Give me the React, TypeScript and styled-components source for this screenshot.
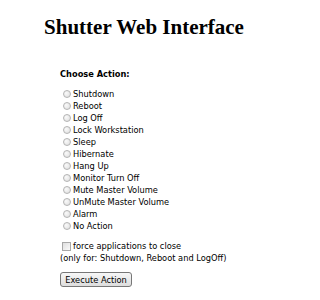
import styled, { createGlobalStyle } from 'styled-components';

const GlobalStyle = createGlobalStyle`
  body {
    margin: 0;
    background: #fff;
  }
`;

const Page = styled.div`
  width: 288px;
  height: 300px;
  background: #fff;
`;

const Title = styled.h1`
  margin: 15px 0 0 0;
  text-align: center;
  font-family: 'Liberation Serif', 'Times New Roman', serif;
  font-weight: 700;
  font-size: 21px;
  line-height: 24px;
  color: #000;
`;

const Form = styled.form`
  display: flex;
  flex-direction: column;
  padding-left: 60px;
  margin-top: 29px;
  font-family: 'DejaVu Sans Condensed', 'DejaVu Sans', Tahoma, sans-serif;
  font-stretch: condensed;
  font-size: 9.2px;
  color: #000;
`;

const Heading = styled.div`
  font-weight: 700;
  line-height: 12px;
`;

const Options = styled.div`
  display: flex;
  flex-direction: column;
  margin-top: 8px;
`;

const Row = styled.label`
  display: flex;
  align-items: center;
  height: 12px;
  line-height: 12px;
`;

const Radio = styled.input.attrs({ type: 'radio' })`
  appearance: none;
  box-sizing: border-box;
  width: 8px;
  height: 8px;
  margin: 0 2.5px 0 2.5px;
  border: 1px solid #b4b4b4;
  border-radius: 50%;
  background: radial-gradient(circle at 35% 35%, #fafafa, #dcdcdc);
`;

const CheckRow = styled.label`
  display: flex;
  align-items: center;
  height: 12px;
  line-height: 12px;
  margin-top: 8px;
`;

const Check = styled.input.attrs({ type: 'checkbox' })`
  appearance: none;
  box-sizing: border-box;
  width: 9px;
  height: 9px;
  margin: 0 2px 0 2px;
  border: 1px solid #a8a8a8;
  background: linear-gradient(135deg, #dedede, #fafafa);
`;

const Note = styled.div`
  line-height: 12px;
`;

const Button = styled.button`
  align-self: flex-start;
  box-sizing: border-box;
  width: 72px;
  height: 15px;
  margin-top: 8px;
  padding: 0;
  border: 1px solid #777;
  border-radius: 3px;
  background: linear-gradient(#f7f7f7, #dddddd);
  font-family: inherit;
  font-stretch: condensed;
  font-size: 9.2px;
  line-height: 13px;
  color: #000;
`;

const actions = [
  'Shutdown',
  'Reboot',
  'Log Off',
  'Lock Workstation',
  'Sleep',
  'Hibernate',
  'Hang Up',
  'Monitor Turn Off',
  'Mute Master Volume',
  'UnMute Master Volume',
  'Alarm',
  'No Action',
];

const App = () => {
  return (
    <Page>
      <GlobalStyle />
      <Title>Shutter Web Interface</Title>
      <Form onSubmit={(e) => e.preventDefault()}>
        <Heading>Choose Action:</Heading>
        <Options>
          {actions.map((a) => (
            <Row key={a}>
              <Radio name="action" value={a} />
              {a}
            </Row>
          ))}
        </Options>
        <CheckRow>
          <Check name="force" />
          force applications to close
        </CheckRow>
        <Note>(only for: Shutdown, Reboot and LogOff)</Note>
        <Button type="submit">Execute Action</Button>
      </Form>
    </Page>
  );
};

export default App;
